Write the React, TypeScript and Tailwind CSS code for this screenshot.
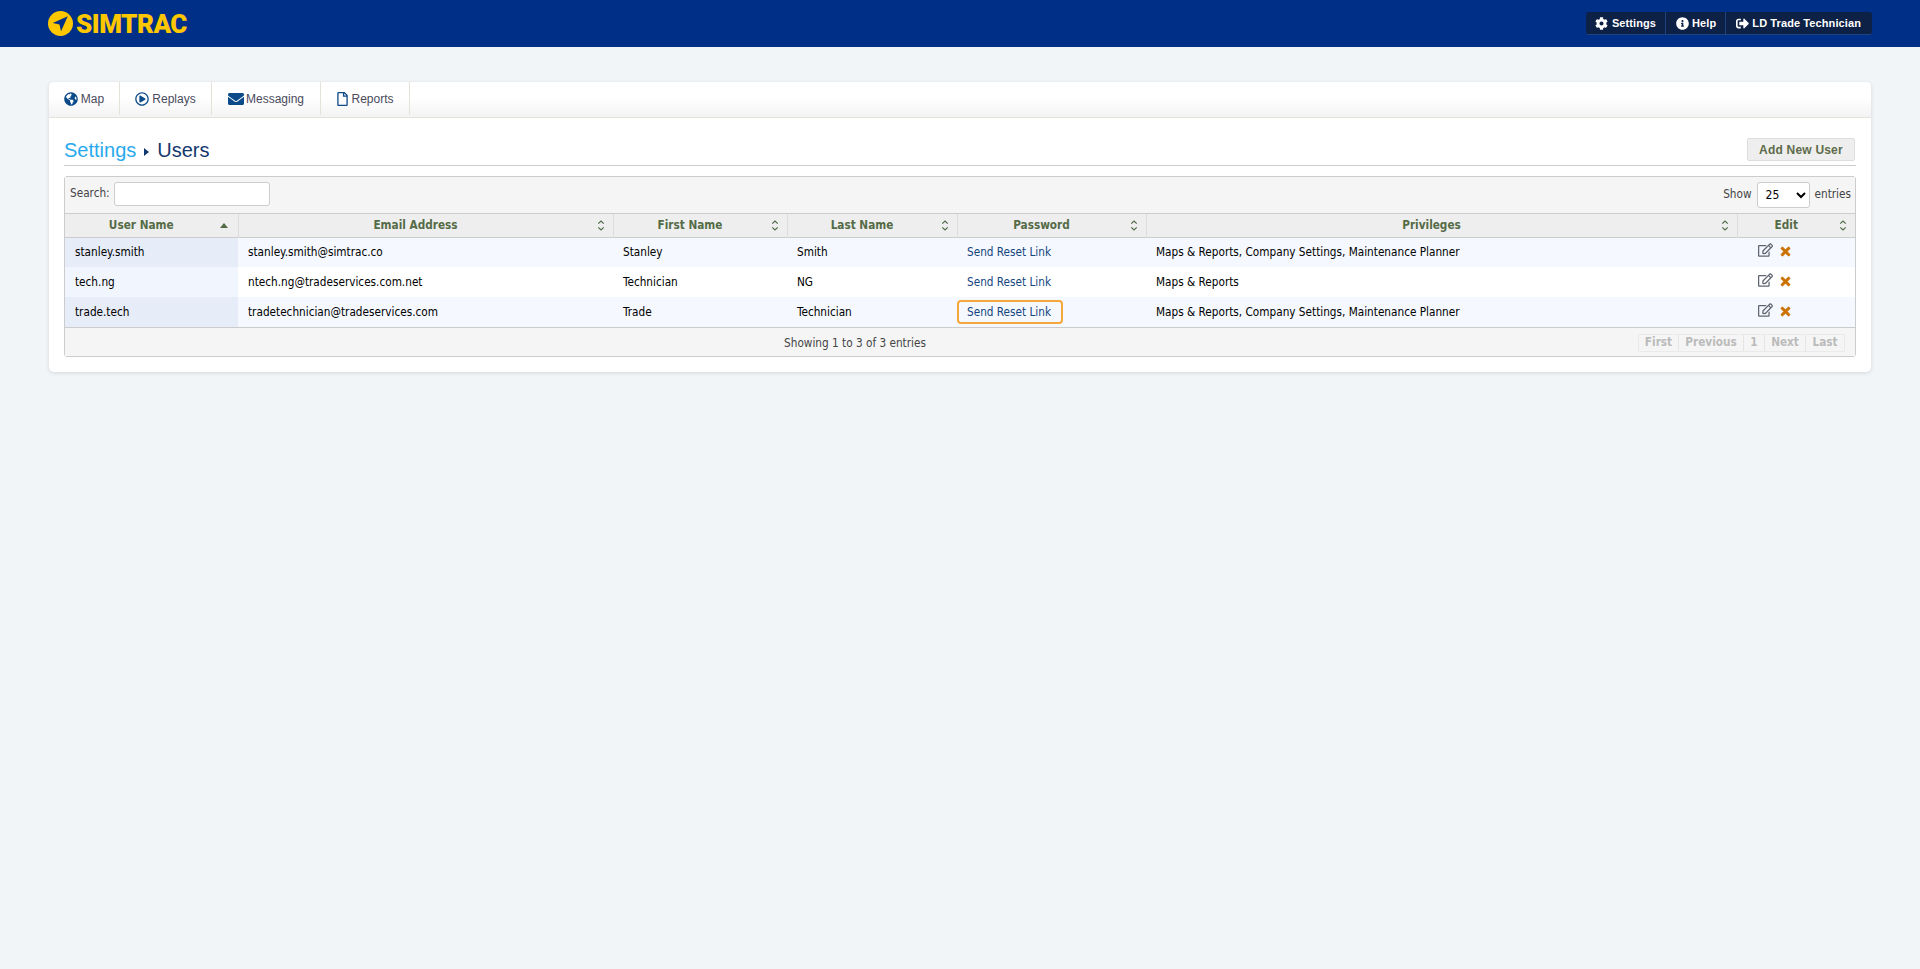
import { FaCog, FaInfoCircle, FaGlobeAmericas, FaRegPlayCircle, FaEnvelope, FaRegFile, FaRegEdit, FaTimes, FaSignOutAlt } from "react-icons/fa";

const columns = [
  { label: "User Name", width: "w-[173px]", sorted: true },
  { label: "Email Address", width: "w-[375px]" },
  { label: "First Name", width: "w-[174px]" },
  { label: "Last Name", width: "w-[170px]" },
  { label: "Password", width: "w-[189px]" },
  { label: "Privileges", width: "w-[591px]" },
  { label: "Edit", width: "w-[118px]" },
];

const users = [
  {
    user: "stanley.smith",
    email: "stanley.smith@simtrac.co",
    first: "Stanley",
    last: "Smith",
    privileges: "Maps & Reports, Company Settings, Maintenance Planner",
  },
  {
    user: "tech.ng",
    email: "ntech.ng@tradeservices.com.net",
    first: "Technician",
    last: "NG",
    privileges: "Maps & Reports",
  },
  {
    user: "trade.tech",
    email: "tradetechnician@tradeservices.com",
    first: "Trade",
    last: "Technician",
    privileges: "Maps & Reports, Company Settings, Maintenance Planner",
  },
];

function Logo() {
  return (
    <div className="flex items-center gap-[3px]">
      <svg viewBox="0 0 24 24" className="w-[25px] h-[25px]">
        <circle cx="12" cy="12" r="12" fill="#ffc700" />
        <path d="M19 5 L4.5 11.5 L11 13 L12.5 19.5 Z" fill="#002f87" />
      </svg>
      <span className="font-['Roboto',sans-serif] font-black text-[26px] leading-none tracking-[-0.5px] text-[#ffc700]">
        SIMTRAC
      </span>
    </div>
  );
}

function SortIcon() {
  return (
    <svg viewBox="0 0 8 12" className="absolute right-[8px] top-[6px] w-[8px] h-[11px]">
      <path d="M1 4 L4 1.2 L7 4 M1 8 L4 10.8 L7 8" fill="none" stroke="#4f6b45" strokeWidth="1.3" />
    </svg>
  );
}

function SortedIcon() {
  return (
    <svg viewBox="0 0 8 5" className="absolute right-[10px] top-[9px] w-[8px] h-[5px]">
      <path d="M0 5 L4 0 L8 5 Z" fill="#4f6b45" />
    </svg>
  );
}

export default function App() {
  return (
    <div className="min-h-screen bg-[#f2f5f8] font-['Liberation_Sans',sans-serif]">
      <header className="h-[47px] bg-[#002f87] flex items-center justify-between pl-[48px] pr-[48px]">
        <Logo />
        <nav className="flex h-[23px] items-stretch rounded-[3px] bg-[#0d2045] border-b border-[#1d4480] text-[11px] font-bold tracking-[0.1px] text-white">
          <a className="flex items-center gap-[4px] pl-[9px] pr-[9px] border-r border-[#1d4480]">
            <FaCog className="w-[13px] h-[13px]" /> Settings
          </a>
          <a className="flex items-center gap-[3px] pl-[10px] pr-[9px] border-r border-[#1d4480]">
            <FaInfoCircle className="w-[13px] h-[13px]" /> Help
          </a>
          <a className="flex items-center gap-[3px] pl-[10px] pr-[11px]">
            <FaSignOutAlt className="w-[13px] h-[13px]" /> LD Trade Technician
          </a>
        </nav>
      </header>

      <div className="px-[49px] pt-[35px]">
        <div className="rounded-[5px] bg-white shadow-[0_1px_4px_rgba(0,0,0,0.12)]">
          <div className="flex h-[36px] rounded-t-[5px] border-b border-[#e5e2da] bg-gradient-to-b from-white from-45% to-[#f3f3f3] pb-[2px] text-[12px] text-[#4a4a5c]">
            <a className="flex w-[71px] items-center justify-center gap-[3px] border-r border-[#e5e2da]">
              <FaGlobeAmericas className="w-[14px] h-[14px] text-[#0d4a8a]" /> Map
            </a>
            <a className="flex w-[92px] items-center justify-center gap-[3px] border-r border-[#e5e2da]">
              <FaRegPlayCircle className="w-[14px] h-[14px] text-[#0d4a8a]" /> Replays
            </a>
            <a className="flex w-[109px] items-center justify-center gap-[2px] border-r border-[#e5e2da]">
              <FaEnvelope className="w-[16px] h-[16px] text-[#0d4a8a]" /> Messaging
            </a>
            <a className="flex w-[89px] items-center justify-center gap-[2px] border-r border-[#e5e2da]">
              <FaRegFile className="w-[13px] h-[14px] text-[#0d4a8a]" /> Reports
            </a>
          </div>

          <div className="px-[15px] pt-[20px] pb-[15px]">
            <div className="flex h-[28px] items-start justify-between border-b border-[#ccc]">
              <h1 className="flex mt-[-1px] items-center text-[20px] leading-[27px] text-[#14386e]">
                <span className="text-[#29a9ee]">Settings</span>
                <svg viewBox="0 0 5 8" className="mx-[8px] mt-[2px] w-[5px] h-[8px]">
                  <path d="M0 0 L5 4 L0 8 Z" fill="#14386e" />
                </svg>
                <span>Users</span>
              </h1>
              <button className="mr-[1px] h-[23px] w-[108px] rounded-[2px] border border-[#ddd] bg-[#eee] text-[12px] font-bold tracking-[0.2px] text-[#5d6b4a]">
                Add New User
              </button>
            </div>

            <div className="mt-[10px] rounded-[3px] border border-[#ccc] font-['DejaVu_Sans',sans-serif] font-stretch-condensed text-[11.7px]">
              <div className="flex h-[37px] items-start justify-between border-b border-[#ccc] bg-[#f5f5f5] pl-[5px] pr-[4px] pt-[5px] text-[#444]">
                <label className="flex items-center gap-[4px]">
                  Search:
                  <input className="h-[24px] w-[156px] rounded-[3px] border border-[#ccc] bg-white" />
                </label>
                <label className="flex items-center gap-[5px]">
                  Show
                  <select className="h-[26px] w-[53px] rounded-[3px] border border-[#ccc] bg-white pl-[4px] text-[12px] text-black">
                    <option>25</option>
                  </select>
                  entries
                </label>
              </div>

              <table className="w-full table-fixed border-collapse">
                <colgroup>
                  {columns.map((c) => (
                    <col key={c.label} className={c.width} />
                  ))}
                </colgroup>
                <thead>
                  <tr className="h-[23px] border-b border-[#ccc] bg-[#eee]">
                    {columns.map((c, i) => (
                      <th
                        key={c.label}
                        className={
                          i < columns.length - 1
                            ? "relative border-r border-[#ddd] pr-[20px] pt-[1px] text-center font-bold text-[#556b47]"
                            : "relative pr-[20px] pt-[1px] text-center font-bold text-[#556b47]"
                        }
                      >
                        {c.label}
                        {c.sorted ? <SortedIcon /> : <SortIcon />}
                      </th>
                    ))}
                  </tr>
                </thead>
                <tbody className="text-black">
                  {users.map((u, i) => (
                    <tr key={u.user} className={i % 2 === 0 ? "h-[30px] bg-[#f5f8fe]" : "h-[30px] bg-white"}>
                      <td className={i % 2 === 0 ? "bg-[#e6ecf8] pl-[10px] pt-[2px]" : "bg-[#f1f5fd] pl-[10px] pt-[2px]"}>{u.user}</td>
                      <td className="pl-[10px] pt-[2px]">{u.email}</td>
                      <td className="pl-[10px] pt-[2px]">{u.first}</td>
                      <td className="pl-[10px] pt-[2px]">{u.last}</td>
                      <td className="pl-0">
                        <a
                          className={
                            i === 2
                              ? "inline-block h-[24px] w-[106px] rounded-[4px] border-2 border-[#f5a73b] pl-[8px] leading-[21px] text-[#14467f]"
                              : "inline-block h-[24px] w-[106px] border-2 border-transparent pl-[8px] leading-[21px] text-[#14467f]"
                          }
                        >
                          Send Reset Link
                        </a>
                      </td>
                      <td className="pl-[10px] pt-[2px]">{u.privileges}</td>
                      <td className="pl-[21px]">
                        <div className="mt-[-3px] flex items-center gap-[7px]">
                          <FaRegEdit className="mt-[-1px] w-[15px] h-[14px] text-[#5f6470]" />
                          <FaTimes className="mt-[1px] w-[11px] h-[13px] stroke-current stroke-[30] text-[#cc7000]" />
                        </div>
                      </td>
                    </tr>
                  ))}
                </tbody>
              </table>

              <div className="relative flex h-[29px] items-center justify-end border-t border-[#ccc] bg-[#f5f5f5] pr-[10px] pt-[1px] text-[#444]">
                <span className="absolute left-0 right-[210px] pt-[2px] text-center">Showing 1 to 3 of 3 entries</span>
                <div className="flex h-[18px] rounded-[2px] border border-[#eaeaea] font-bold text-[#bbb]">
                  <span className="flex w-[40px] items-center justify-center border-r border-[#e5e5e5]">First</span>
                  <span className="flex w-[65px] items-center justify-center border-r border-[#e5e5e5]">Previous</span>
                  <span className="flex w-[21px] items-center justify-center border-r border-[#e5e5e5]">1</span>
                  <span className="flex w-[41px] items-center justify-center border-r border-[#e5e5e5]">Next</span>
                  <span className="flex w-[38px] items-center justify-center">Last</span>
                </div>
              </div>
            </div>
          </div>
        </div>
      </div>
    </div>
  );
}
